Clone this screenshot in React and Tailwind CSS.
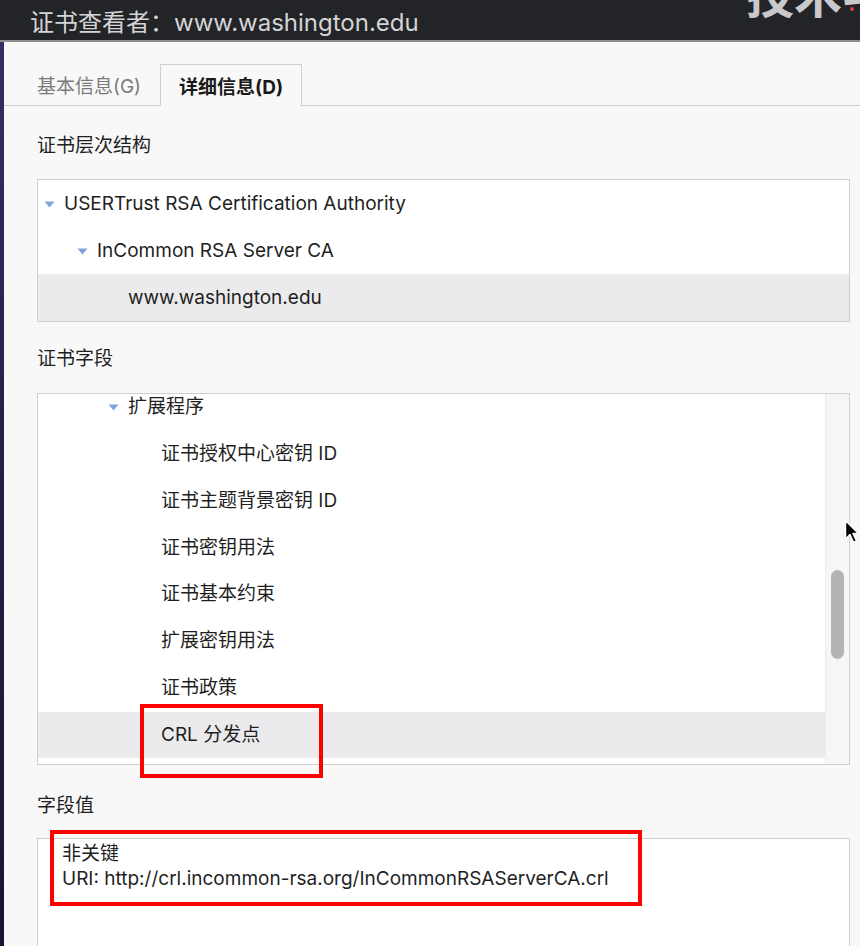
import React from 'react';

const FONT = { fontFamily: 'Inter, "Noto Sans CJK SC", sans-serif' };

const FIELDS = [
  { label: '扩展程序', depth: 1, open: true },
  { label: '证书授权中心密钥 ID', depth: 2 },
  { label: '证书主题背景密钥 ID', depth: 2 },
  { label: '证书密钥用法', depth: 2 },
  { label: '证书基本约束', depth: 2 },
  { label: '扩展密钥用法', depth: 2 },
  { label: '证书政策', depth: 2 },
  { label: 'CRL 分发点', depth: 2, selected: true },
];

function Caret() {
  return (
    <svg width="11" height="7" viewBox="0 0 11 7" className="shrink-0">
      <path d="M0.5 0.5 H10.5 L5.5 6.5 Z" fill="#7ea6dc" />
    </svg>
  );
}

function Cursor() {
  return (
    <svg width="16" height="26" viewBox="0 0 16 26" className="absolute left-[844px] top-[519px]">
      <path d="M1.5 1.5 L1.5 20 L6 15.5 L9.5 23.5 L12.5 22 L9 14.5 L14.5 14.5 Z" fill="#000" stroke="#fff" strokeWidth="1.5" strokeLinejoin="round" />
    </svg>
  );
}

export default function App() {
  return (
    <div className="relative h-[946px] w-[860px] overflow-hidden bg-[#f8f8f8] text-[#1f1f1f]" style={FONT}>
      {/* title bar */}
      <div className="relative flex h-[42px] items-center overflow-hidden border-b-2 border-[#8c8c8e] bg-[#232428] pl-[30px] pt-[5px]">
        <span className="text-[24px] text-[#d4d4d6]">证书查看者：www.washington.edu</span>
        <span className="absolute left-[746px] top-[-40px] whitespace-nowrap text-[48px] font-bold text-[#c9c9cb]">
          技术宅
        </span>
        <span className="absolute left-[850px] top-[7px] h-[4px] w-[4px] rounded-full bg-[#e0403a]" />
      </div>

      <div className="flex h-[904px]">
        <div className="w-[4px] shrink-0 bg-gradient-to-b from-[#3b2b63] via-[#281c48] to-[#1b1433]" />

        <div className="relative flex-1">
          {/* tabs */}
          <div className="flex h-[64px] items-end border-b border-[#cfcfcf] pl-[33px]">
            <div className="flex h-[41px] items-center pr-[19px] pt-[6px] text-[19px] text-[#7a7a7a]">基本信息(G)</div>
            <div className="-mb-px flex h-[42px] items-center border border-b-0 border-[#cfcfcf] bg-[#f8f8f8] px-[18px] pt-[6px] text-[19px] font-bold text-[#1a1a1a]">
              详细信息(D)
            </div>
          </div>

          <div className="pl-[33px] pr-[10px]">
            <div className="flex h-[73px] items-center pt-[8px] text-[19px]">证书层次结构</div>
            <div className="border border-[#cfcfcf] bg-white text-[19px]">
              <div className="flex h-[47px] items-center gap-[9px] pl-[6px] pt-[2px]">
                <Caret />
                <span>USERTrust RSA Certification Authority</span>
              </div>
              <div className="flex h-[47px] items-center gap-[9px] pl-[39px] pt-[2px]">
                <Caret />
                <span>InCommon RSA Server CA</span>
              </div>
              <div className="flex h-[47px] items-center bg-[#ebebed] pl-[90px] pt-[2px]">www.washington.edu</div>
            </div>

            <div className="flex h-[71px] items-center pt-[4px] text-[19px]">证书字段</div>
            <div className="flex h-[372px] overflow-hidden border border-[#cfcfcf] bg-white text-[19px]">
              <div className="flex-1 overflow-hidden">
                <div className="-mt-[10px]">
                  {FIELDS.map((f) => (
                    <div
                      key={f.label}
                      className={`flex h-[46.8px] items-center ${f.selected ? 'bg-[#ebebed]' : ''} ${f.depth === 1 ? 'gap-[9px] pl-[70px]' : 'pl-[123px]'}`}
                    >
                      {f.open && <Caret />}
                      <span>{f.label}</span>
                    </div>
                  ))}
                </div>
              </div>
              <div className="w-[24px] shrink-0 border-l border-[#ececec] bg-[#f6f6f6] px-[5px] pt-[176px]">
                <div className="h-[89px] rounded-full bg-[#b4b4b6]" />
              </div>
            </div>

            <div className="flex h-[73px] items-center pt-[10px] text-[19px]">字段值</div>
            <div className="h-[200px] border border-[#cfcfcf] bg-white px-[24px] pt-[2px] text-[19px] leading-[25px]">
              <div>非关键</div>
              <div>URI: http://crl.incommon-rsa.org/InCommonRSAServerCA.crl</div>
            </div>
          </div>

          {/* red highlight boxes */}
          <div className="absolute left-[136px] top-[662px] h-[74px] w-[183px] border-4 border-[#ff0000]" />
          <div className="absolute left-[46px] top-[788px] h-[76px] w-[592px] border-4 border-[#ff0000]" />
        </div>
      </div>

      <Cursor />
    </div>
  );
}
